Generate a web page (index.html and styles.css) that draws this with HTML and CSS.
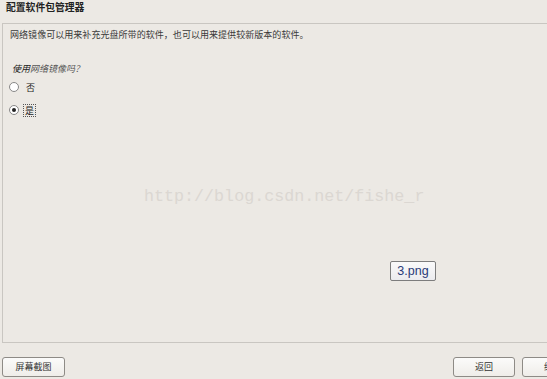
FILE: index.html
```html
<!DOCTYPE html>
<html>
<head>
<meta charset="utf-8">
<link rel="stylesheet" href="styles.css">
</head>
<body>
<div class="window">
  <div class="title">配置软件包管理器</div>
  <div class="panel">
    <div class="desc">网络镜像可以用来补充光盘所带的软件，也可以用来提供较新版本的软件。</div>
    <div class="question"><span class="q1">使用</span>网络镜像吗？</div>
    <div class="option"><span class="radio"></span><span class="label">否</span></div>
    <div class="option"><span class="radio checked"></span><span class="label focus">是</span></div>
    <div class="watermark">http://blog.csdn.net/fishe_r</div>
    <div class="tooltip">3.png</div>
  </div>
  <div class="buttons">
    <button class="btn">屏幕截图</button>
    <div class="spacer"></div>
    <button class="btn btn-back">返回</button>
    <button class="btn btn-cut">继续</button>
  </div>
</div>
</body>
</html>
```
FILE: styles.css
```css
html, body {
  margin: 0;
  padding: 0;
  background: #ece9e4;
  overflow: hidden;
}
body {
  width: 547px;
  height: 379px;
  font-family: "Noto Sans CJK SC", "Liberation Sans", sans-serif;
  color: #333;
}
.window {
  display: flex;
  flex-direction: column;
  height: 379px;
}
.title {
  font-size: 9.8px;
  font-weight: bold;
  color: #222;
  padding: 1px 0 0 6px;
  height: 23px;
  line-height: 13px;
  box-sizing: border-box;
}
.panel {
  position: relative;
  margin-left: 2px;
  margin-right: -10px;
  height: 320px;
  border: 1px solid #c9c6c1;
  border-right: none;
  box-sizing: border-box;
}
.desc {
  font-size: 9.05px;
  line-height: 12px;
  padding: 5px 0 0 7px;
  color: #3a3a3a;
}
.question {
  font-size: 9px;
  font-style: italic;
  line-height: 12px;
  padding: 22px 0 0 9px;
  color: #555;
}
.q1 { color: #222; }
.option {
  display: flex;
  align-items: center;
  padding-left: 6px;
  font-size: 9px;
  color: #222;
  height: 14px;
}
.question + .option { margin-top: 5px; }
.option + .option { margin-top: 9px; }
.radio {
  width: 8px;
  height: 8px;
  border: 1px solid #888;
  border-radius: 50%;
  background: #fff;
  position: relative;
  box-sizing: content-box;
}
.radio.checked::after {
  content: "";
  position: absolute;
  left: 2px;
  top: 2px;
  width: 4px;
  height: 4px;
  border-radius: 50%;
  background: #222;
}
.label {
  margin-left: 6px;
  line-height: 11px;
  padding: 0 1px;
}
.label.focus {
  border: 1px dotted #555;
  margin-left: 4px;
}
.watermark {
  position: absolute;
  left: 141px;
  top: 163px;
  font-family: "Liberation Mono", "DejaVu Sans Mono", monospace;
  font-size: 16.7px;
  color: #dbd7d2;
}
.tooltip {
  position: absolute;
  left: 387px;
  top: 237px;
  width: 46px;
  height: 20px;
  box-sizing: border-box;
  border: 1px solid #7d7d7d;
  border-radius: 2px;
  background: linear-gradient(#fafafa, #ebebee);
  font-family: "Liberation Sans", Arial, sans-serif;
  font-size: 12.5px;
  line-height: 18px;
  text-align: center;
  color: #2a3a78;
}
.buttons {
  display: flex;
  align-items: flex-start;
  padding: 14px 0 0 2px;
  margin-right: -37px;
}
.spacer { flex: 1; }
.btn {
  width: 63px;
  height: 20px;
  box-sizing: border-box;
  border: 1px solid #8e8b86;
  border-radius: 3px;
  background: linear-gradient(#fbfbfa, #efede9);
  font-family: "Noto Sans CJK SC", sans-serif;
  font-size: 9px;
  color: #333;
  padding: 0;
  line-height: 16px;
}
.btn-back { width: 62px; }
.btn + .btn { margin-left: 7px; }
.btn-cut { width: 62px; }
```
